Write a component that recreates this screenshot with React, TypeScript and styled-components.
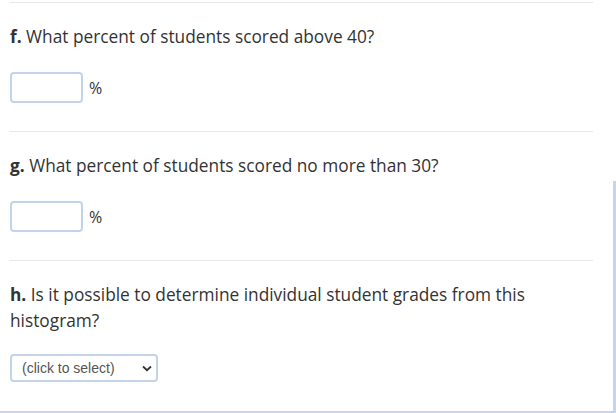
import React from "react";
import styled, { createGlobalStyle } from "styled-components";

const Global = createGlobalStyle`
  html, body { margin: 0; padding: 0; background: #fff; }
  body { width: 616px; height: 413px; overflow: hidden; }
`;

const Page = styled.div`
  display: grid;
  grid-template-columns: 1fr 3px;
  width: 616px;
  height: 411px;
  border-bottom: 2px solid #c5d5ea;
  box-sizing: content-box;
`;

const Content = styled.div`
  padding: 2px 20px 0 9px;
  font-family: "Open Sans", "Liberation Sans", sans-serif;
  color: #333;
`;

const Edge = styled.div`
  margin-top: 181px;
  background: #c5d5ea;
`;

const Part = styled.section`
  border-top: 1px solid #e8e8e8;
  padding: 21px 0 28px 1px;
`;

const Question = styled.p<{ $gap?: number }>`
  margin: 0 0 ${(p) => p.$gap ?? 22}px;
  font-size: 17.3px;
  line-height: 26px;
`;

const Label = styled.b`
  font-weight: 700;
`;

const AnswerRow = styled.div`
  display: flex;
  align-items: center;
  gap: 6px;
  font-size: 16px;
`;

const NumberInput = styled.input`
  width: 73px;
  height: 31px;
  box-sizing: border-box;
  border: 2px solid #c3d3ea;
  border-radius: 4px;
  padding: 0 6px;
  outline: none;
`;

const SelectWrap = styled.div`
  position: relative;
  width: 148px;
  height: 28px;
`;

const Select = styled.select`
  appearance: none;
  width: 148px;
  height: 28px;
  box-sizing: border-box;
  border: 2px solid #c3d3ea;
  border-radius: 4px;
  background: #fff;
  padding: 0 0 0 10px;
  font-family: "Liberation Sans", Arial, sans-serif;
  font-size: 14px;
  color: #555;
`;

const Chevron = styled.svg`
  position: absolute;
  right: 6px;
  top: 11px;
  pointer-events: none;
`;

function Answer() {
  return (
    <AnswerRow>
      <NumberInput type="text" aria-label="percent" />
      <span>%</span>
    </AnswerRow>
  );
}

export default function App() {
  return (
    <>
      <Global />
      <Page>
        <Content>
          <Part>
            <Question>
              <Label>f.</Label> What percent of students scored above 40?
            </Question>
            <Answer />
          </Part>
          <Part>
            <Question>
              <Label>g.</Label> What percent of students scored no more than 30?
            </Question>
            <Answer />
          </Part>
          <Part>
            <Question $gap={20}>
              <Label>h.</Label> Is it possible to determine individual student grades from this histogram?
            </Question>
            <SelectWrap>
              <Select defaultValue="">
                <option value="">(click to select)</option>
                <option value="yes">Yes</option>
                <option value="no">No</option>
              </Select>
              <Chevron width="10" height="7" viewBox="0 0 10 7">
                <path d="M1 1.5 L5 5.2 L9 1.5" fill="none" stroke="#333" strokeWidth="1.8" />
              </Chevron>
            </SelectWrap>
          </Part>
        </Content>
        <Edge />
      </Page>
    </>
  );
}
